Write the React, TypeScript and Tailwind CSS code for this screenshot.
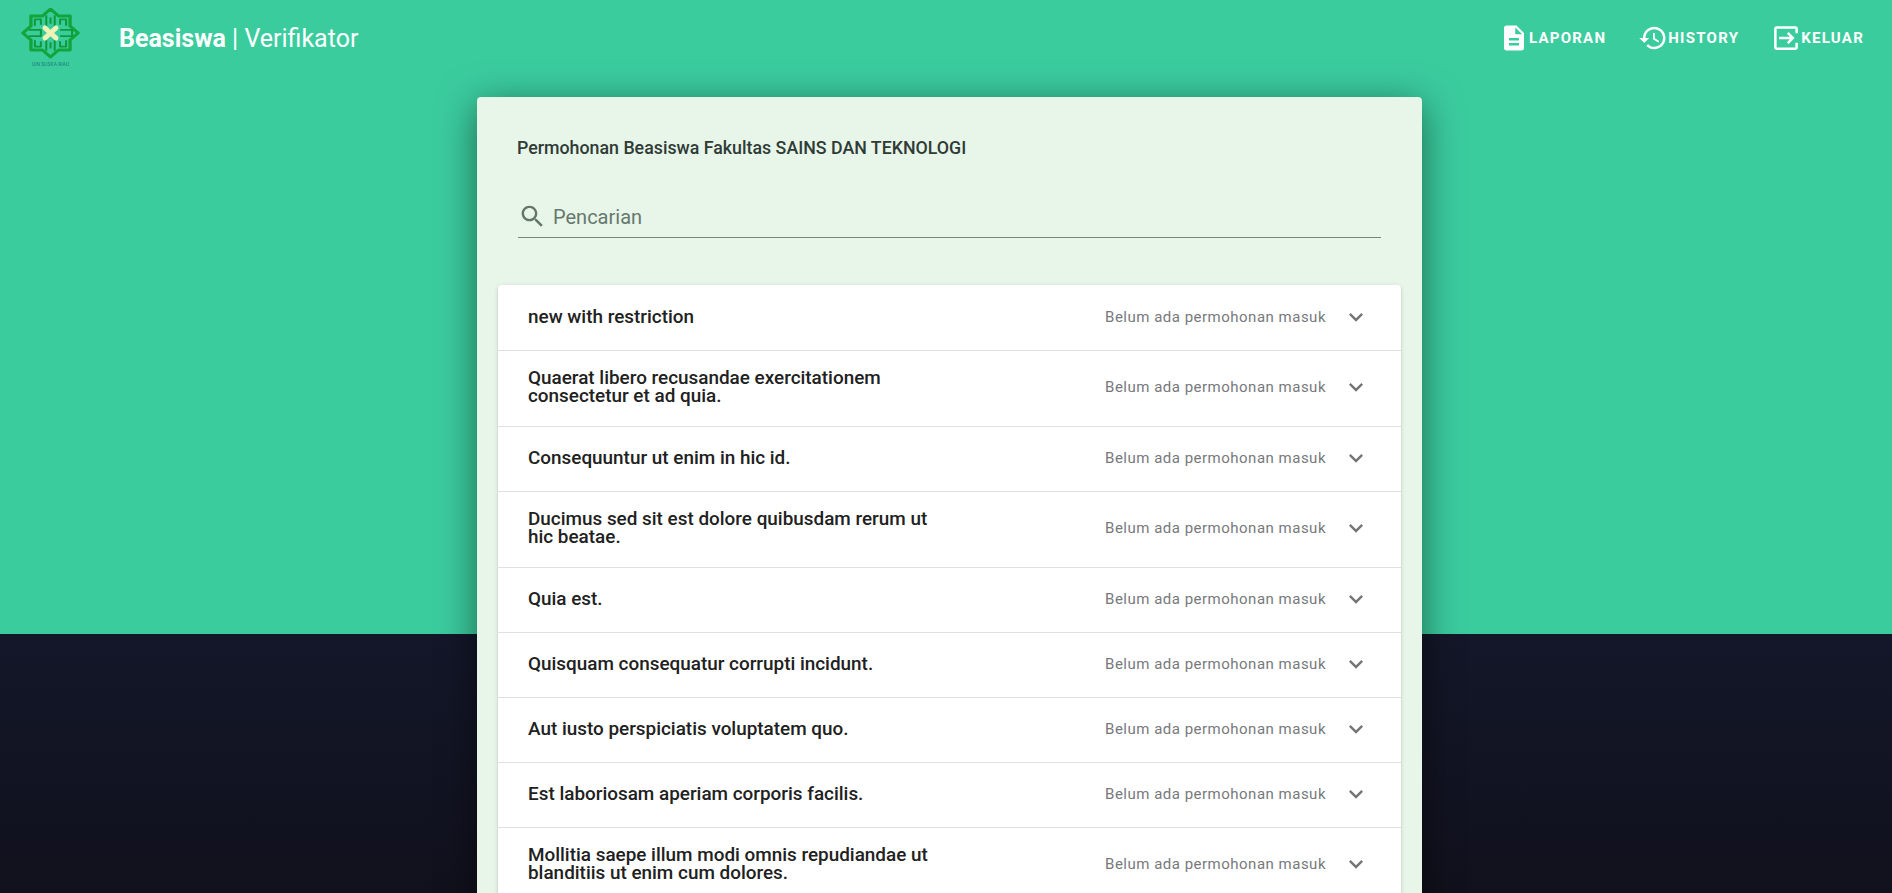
const rows = [
  "new with restriction",
  "Quaerat libero recusandae exercitationem consectetur et ad quia.",
  "Consequuntur ut enim in hic id.",
  "Ducimus sed sit est dolore quibusdam rerum ut hic beatae.",
  "Quia est.",
  "Quisquam consequatur corrupti incidunt.",
  "Aut iusto perspiciatis voluptatem quo.",
  "Est laboriosam aperiam corporis facilis.",
  "Mollitia saepe illum modi omnis repudiandae ut blanditiis ut enim cum dolores.",
];

function NavIcon({ d }: { d: string }) {
  return (
    <svg viewBox="0 0 24 24" className="w-[30px] h-[30px] fill-white shrink-0">
      <path d={d} />
    </svg>
  );
}

// logo kampus, digambar ulang karena tidak ada file gambar
function Logo() {
  return (
    <svg viewBox="0 0 60 62" className="w-[60px] h-[62px] blur-[0.5px]">
      <g transform="translate(30.5 25) scale(1.2 1.04)" fill="none" stroke="#12a53c" strokeLinejoin="round">
        <path
          strokeWidth="2.8"
          d="M0 -23 L6.7 -16.3 L16.3 -16.3 L16.3 -6.7 L23 0 L16.3 6.7 L16.3 16.3 L6.7 16.3 L0 23 L-6.7 16.3 L-16.3 16.3 L-16.3 6.7 L-23 0 L-16.3 -6.7 L-16.3 -16.3 L-6.7 -16.3 Z"
        />
        <g stroke="#0f9a38" strokeWidth="1.7">
          <path d="M-13 -7 V-13 H-8 V-8 M-3.5 -7 V-17 M3.5 -7 V-17 M0 -9 V-15 M8 -8 V-13 H13 V-7" />
          <path d="M-13 7 V13 H-8 V8 M-3.5 7 V17 M3.5 7 V17 M0 9 V15 M8 8 V13 H13 V7" />
          <path d="M-18 -3 H-8 V3 H-18 M8 -3 H18 V3 H8" />
        </g>
      </g>
      <path
        d="M25 20 L36 30 M36 20 L25 30"
        fill="none"
        stroke="#eef3b8"
        strokeWidth="5"
        strokeLinecap="round"
      />
      <text x="30.5" y="57.5" textAnchor="middle" fontSize="5" fill="#1f7a78" fontFamily="Roboto, sans-serif">
        UIN SUSKA RIAU
      </text>
    </svg>
  );
}

export default function App() {
  return (
    <div className="h-screen overflow-hidden bg-[linear-gradient(to_bottom,#3bcc9e_0,#3bcc9e_634px,#131729_634px,#11111d_100%)] font-['Roboto',sans-serif]">
      <header className="h-20 flex items-start pr-3 text-white">
        <div className="ml-5 mt-2">
          <Logo />
        </div>
        <div className="ml-[39px] mt-[23px] text-[25px] leading-8">
          <b className="font-bold">Beasiswa</b> | Verifikator
        </div>
        <nav className="ml-auto flex mt-[23px]">
          <a className="flex items-center px-4 h-[30px] text-[15px] font-bold uppercase tracking-[1.25px]">
            <NavIcon d="M14 2H6c-1.1 0-1.99.9-1.99 2L4 20c0 1.1.89 2 1.99 2H18c1.1 0 2-.9 2-2V8l-6-6zm2 16H8v-2h8v2zm0-4H8v-2h8v2zm-3-5V3.5L18.5 9H13z" />
            Laporan
          </a>
          <a className="flex items-center px-4 h-[30px] text-[15px] font-bold uppercase tracking-[1.25px]">
            <NavIcon d="M13 3c-4.97 0-9 4.03-9 9H1l3.89 3.89.07.14L9 12H6c0-3.87 3.13-7 7-7s7 3.13 7 7-3.13 7-7 7c-1.93 0-3.68-.79-4.94-2.06l-1.42 1.42C8.27 19.99 10.51 21 13 21c4.97 0 9-4.03 9-9s-4.03-9-9-9zm-1 5v5l4.28 2.54.72-1.21-3.5-2.08V8H12z" />
            History
          </a>
          <a className="flex items-center px-4 h-[30px] text-[15px] font-bold uppercase tracking-[1.25px]">
            <NavIcon d="M19.5 2.5h-15C3.4 2.5 2.5 3.4 2.5 4.5v15c0 1.1.9 2 2 2h15c1.1 0 2-.9 2-2v-3.7h-2v3.7h-15v-15h15v3.7h2V4.5c0-1.1-.9-2-2-2zM14.1 7.2l-1.4 1.4 2.4 2.4H6.5v2h8.6l-2.4 2.4 1.4 1.4 4.8-4.8-4.8-4.8z" />
            Keluar
          </a>
        </nav>
      </header>

      <main className="w-[945px] ml-[477px] mt-[17px] bg-[#e8f5e9] rounded shadow-[0_8px_38px_rgba(0,0,0,0.5)] px-[21px] pt-[41px] pb-10">
        <h1 className="pl-[19px] text-[17.8px] leading-5 font-medium text-[#2f3b36]">
          Permohonan Beasiswa Fakultas SAINS DAN TEKNOLOGI
        </h1>
        <div className="ml-5 mr-5 mt-[38px] h-[42px] flex items-center border-b border-[#78897c]">
          <svg viewBox="0 0 24 24" className="w-[29px] h-[29px] fill-[#64766a] shrink-0">
            <path d="M15.5 14h-.79l-.28-.27C15.41 12.59 16 11.11 16 9.5 16 5.91 13.09 3 9.5 3S3 5.91 3 9.5 5.91 16 9.5 16c1.61 0 3.09-.59 4.23-1.57l.27.28v.79l5 4.99L20.49 19l-4.99-5zm-6 0C7.01 14 5 11.99 5 9.5S7.01 5 9.5 5 14 7.01 14 9.5 11.99 14 9.5 14z" />
          </svg>
          <span className="ml-1.5 text-xl font-normal text-[#66796d]">Pencarian</span>
        </div>

        <div className="mt-[47px] bg-white rounded shadow-[0_3px_1px_-2px_rgba(0,0,0,0.2),0_2px_2px_0_rgba(0,0,0,0.14),0_1px_5px_0_rgba(0,0,0,0.12)]">
          {rows.map((title, i) => (
            <div
              key={i}
              className="min-h-[65px] first:min-h-[66px] pt-[18px] first:pt-[19px] pb-[21px] pl-[30px] pr-[31px] flex items-center border-b border-[#e0e0e0]"
            >
              <div className="w-[410px] text-[18.9px] leading-[18px] font-medium text-[#212121]">{title}</div>
              <div className="ml-auto text-[15px] leading-5 tracking-[0.5px] text-[#77797c]">
                Belum ada permohonan masuk
              </div>
              <svg viewBox="0 0 24 24" className="w-7 h-7 -my-2 fill-[#757575] ml-[16px] shrink-0">
                <path d="M7.41 8.59L12 13.17l4.59-4.58L18 10l-6 6-6-6 1.41-1.41z" />
              </svg>
            </div>
          ))}
        </div>
      </main>
    </div>
  );
}
